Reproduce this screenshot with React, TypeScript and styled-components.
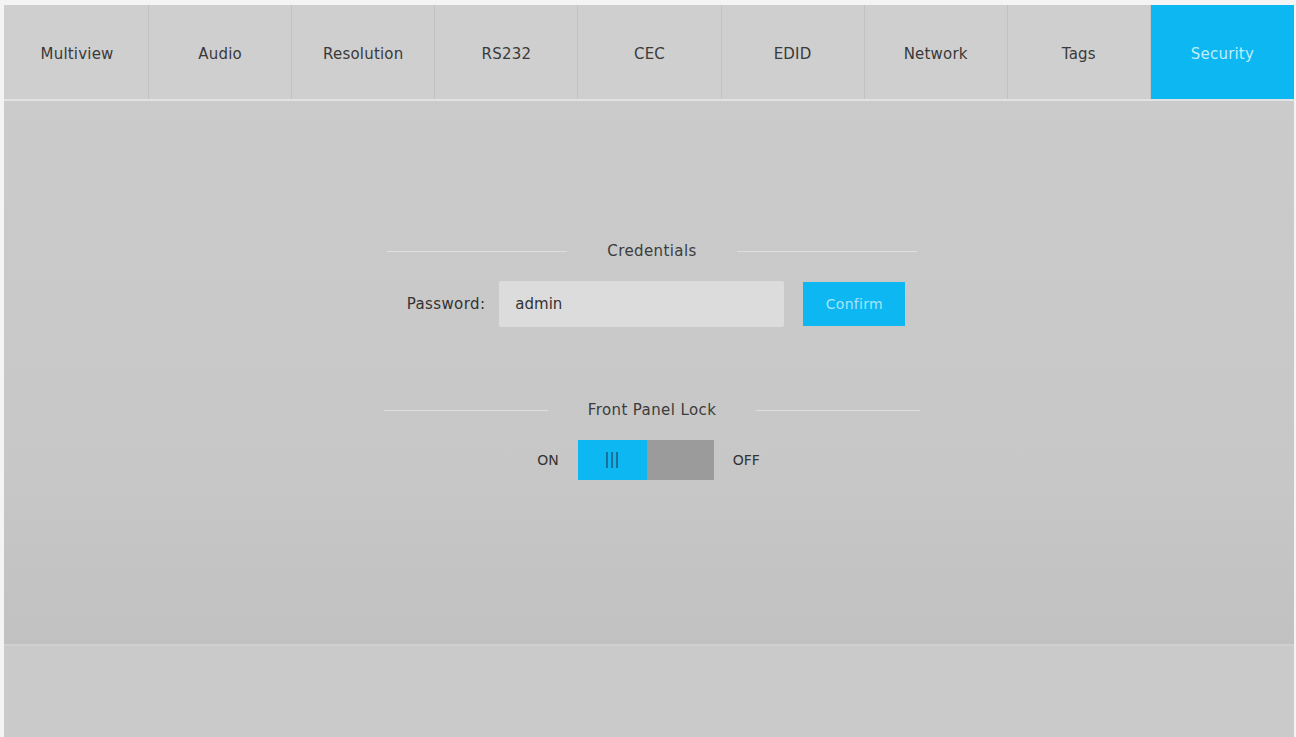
import { useState } from "react";
import styled, { createGlobalStyle } from "styled-components";

const GlobalStyle = createGlobalStyle`
  body {
    margin: 0;
    background: #f4f4f4;
    font-family: "DejaVu Sans", "Noto Sans", sans-serif;
    color: #333;
  }
`;

const TABS = [
  "Multiview",
  "Audio",
  "Resolution",
  "RS232",
  "CEC",
  "EDID",
  "Network",
  "Tags",
  "Security",
];

function App() {
  const [active, setActive] = useState("Security");
  const [password, setPassword] = useState("admin");
  const [locked, setLocked] = useState(true);

  return (
    <Page>
      <GlobalStyle />
      <TabBar>
        {TABS.map((t) => (
          <Tab key={t} $active={t === active} onClick={() => setActive(t)}>
            {t}
          </Tab>
        ))}
      </TabBar>

      <Panel>
        <Section>
          <SectionTitle>
            <Rule />
            <span>Credentials</span>
            <Rule />
          </SectionTitle>
          <FormRow>
            <Label>Password:</Label>
            <TextInput
              type="text"
              value={password}
              onChange={(e) => setPassword(e.target.value)}
            />
            <ConfirmButton>Confirm</ConfirmButton>
          </FormRow>
        </Section>

        <Section $wide>
          <SectionTitle>
            <Rule />
            <span>Front Panel Lock</span>
            <Rule />
          </SectionTitle>
          <ToggleRow>
            <ToggleLabel>ON</ToggleLabel>
            <Toggle onClick={() => setLocked(!locked)} $on={locked}>
              <Knob $on={locked}>
                <Grip />
                <Grip />
                <Grip />
              </Knob>
            </Toggle>
            <ToggleLabel>OFF</ToggleLabel>
          </ToggleRow>
        </Section>
      </Panel>

      <Footer />
    </Page>
  );
}

const Page = styled.div`
  height: 737px;
  padding: 5px 2px 0 4px;
  box-sizing: border-box;
  display: flex;
  flex-direction: column;
  overflow: hidden;
`;

const TabBar = styled.div`
  display: grid;
  grid-template-columns: repeat(9, 1fr);
  height: 94px;
  background: #cfcfcf;
  border-bottom: 2px solid #e2e2e2;
  padding-left: 2px;
`;

const Tab = styled.div<{ $active: boolean }>`
  display: flex;
  align-items: center;
  justify-content: center;
  font-size: 15px;
  letter-spacing: 0.2px;
  cursor: pointer;
  border-right: 1px solid #c2c2c2;
  background: ${(p) => (p.$active ? "#0db7f2" : "transparent")};
  color: ${(p) => (p.$active ? "#bfeefc" : "#3a3a3a")};
  padding-top: 4px;

  &:last-child {
    border-right: none;
  }
`;

const Panel = styled.div`
  height: 545px;
  background: linear-gradient(180deg, #cbcbcb 0%, #c7c7c7 70%, #c1c1c1 100%);
  border-bottom: 2px solid #d0d0d0;
  display: flex;
  flex-direction: column;
  align-items: center;
  padding-top: 140px;
  box-sizing: border-box;
`;

const Section = styled.div<{ $wide?: boolean }>`
  width: ${(p) => (p.$wide ? "536px" : "530px")};
  margin-left: 6px;
  display: flex;
  flex-direction: column;
  align-items: center;
  gap: 20px;
  margin-bottom: 73px;
`;

const SectionTitle = styled.div`
  width: 100%;
  display: flex;
  align-items: center;
  gap: 40px;
  font-size: 15px;
  letter-spacing: 0.4px;
  line-height: 20px;
  color: #3c3c3c;
`;

const Rule = styled.div`
  flex: 1;
  height: 1px;
  background: #dedede;
`;

const FormRow = styled.div`
  display: flex;
  align-items: center;
  margin-left: 8px;
`;

const Label = styled.span`
  font-size: 15px;
  letter-spacing: 0.4px;
  color: #333;
  margin-right: 14px;
`;

const TextInput = styled.input`
  width: 285px;
  height: 46px;
  box-sizing: border-box;
  border: none;
  border-radius: 2px;
  background: #dcdcdc;
  padding: 0 16px;
  font-family: inherit;
  font-size: 15px;
  color: #333;
  outline: none;
  margin-right: 19px;
`;

const ConfirmButton = styled.button`
  width: 102px;
  height: 44px;
  border: none;
  background: #0db7f2;
  color: #a8e4f8;
  font-family: inherit;
  font-size: 14px;
  letter-spacing: 0.3px;
  cursor: pointer;
`;

const ToggleRow = styled.div`
  display: flex;
  align-items: center;
  gap: 19px;
  margin-right: 7px;
`;

const ToggleLabel = styled.span`
  font-size: 14px;
  color: #333;
`;

const Toggle = styled.div<{ $on: boolean }>`
  width: 136px;
  height: 40px;
  background: #9b9b9b;
  display: flex;
  justify-content: ${(p) => (p.$on ? "flex-start" : "flex-end")};
  cursor: pointer;
`;

const Knob = styled.div<{ $on: boolean }>`
  width: 69px;
  height: 100%;
  background: ${(p) => (p.$on ? "#0db7f2" : "#e6e6e6")};
  display: flex;
  align-items: center;
  justify-content: center;
  gap: 3px;
`;

const Grip = styled.span`
  width: 2px;
  height: 16px;
  background: #1a6f9c;
`;

const Footer = styled.div`
  flex: 1;
  background: #cacaca;
`;

export default App;
